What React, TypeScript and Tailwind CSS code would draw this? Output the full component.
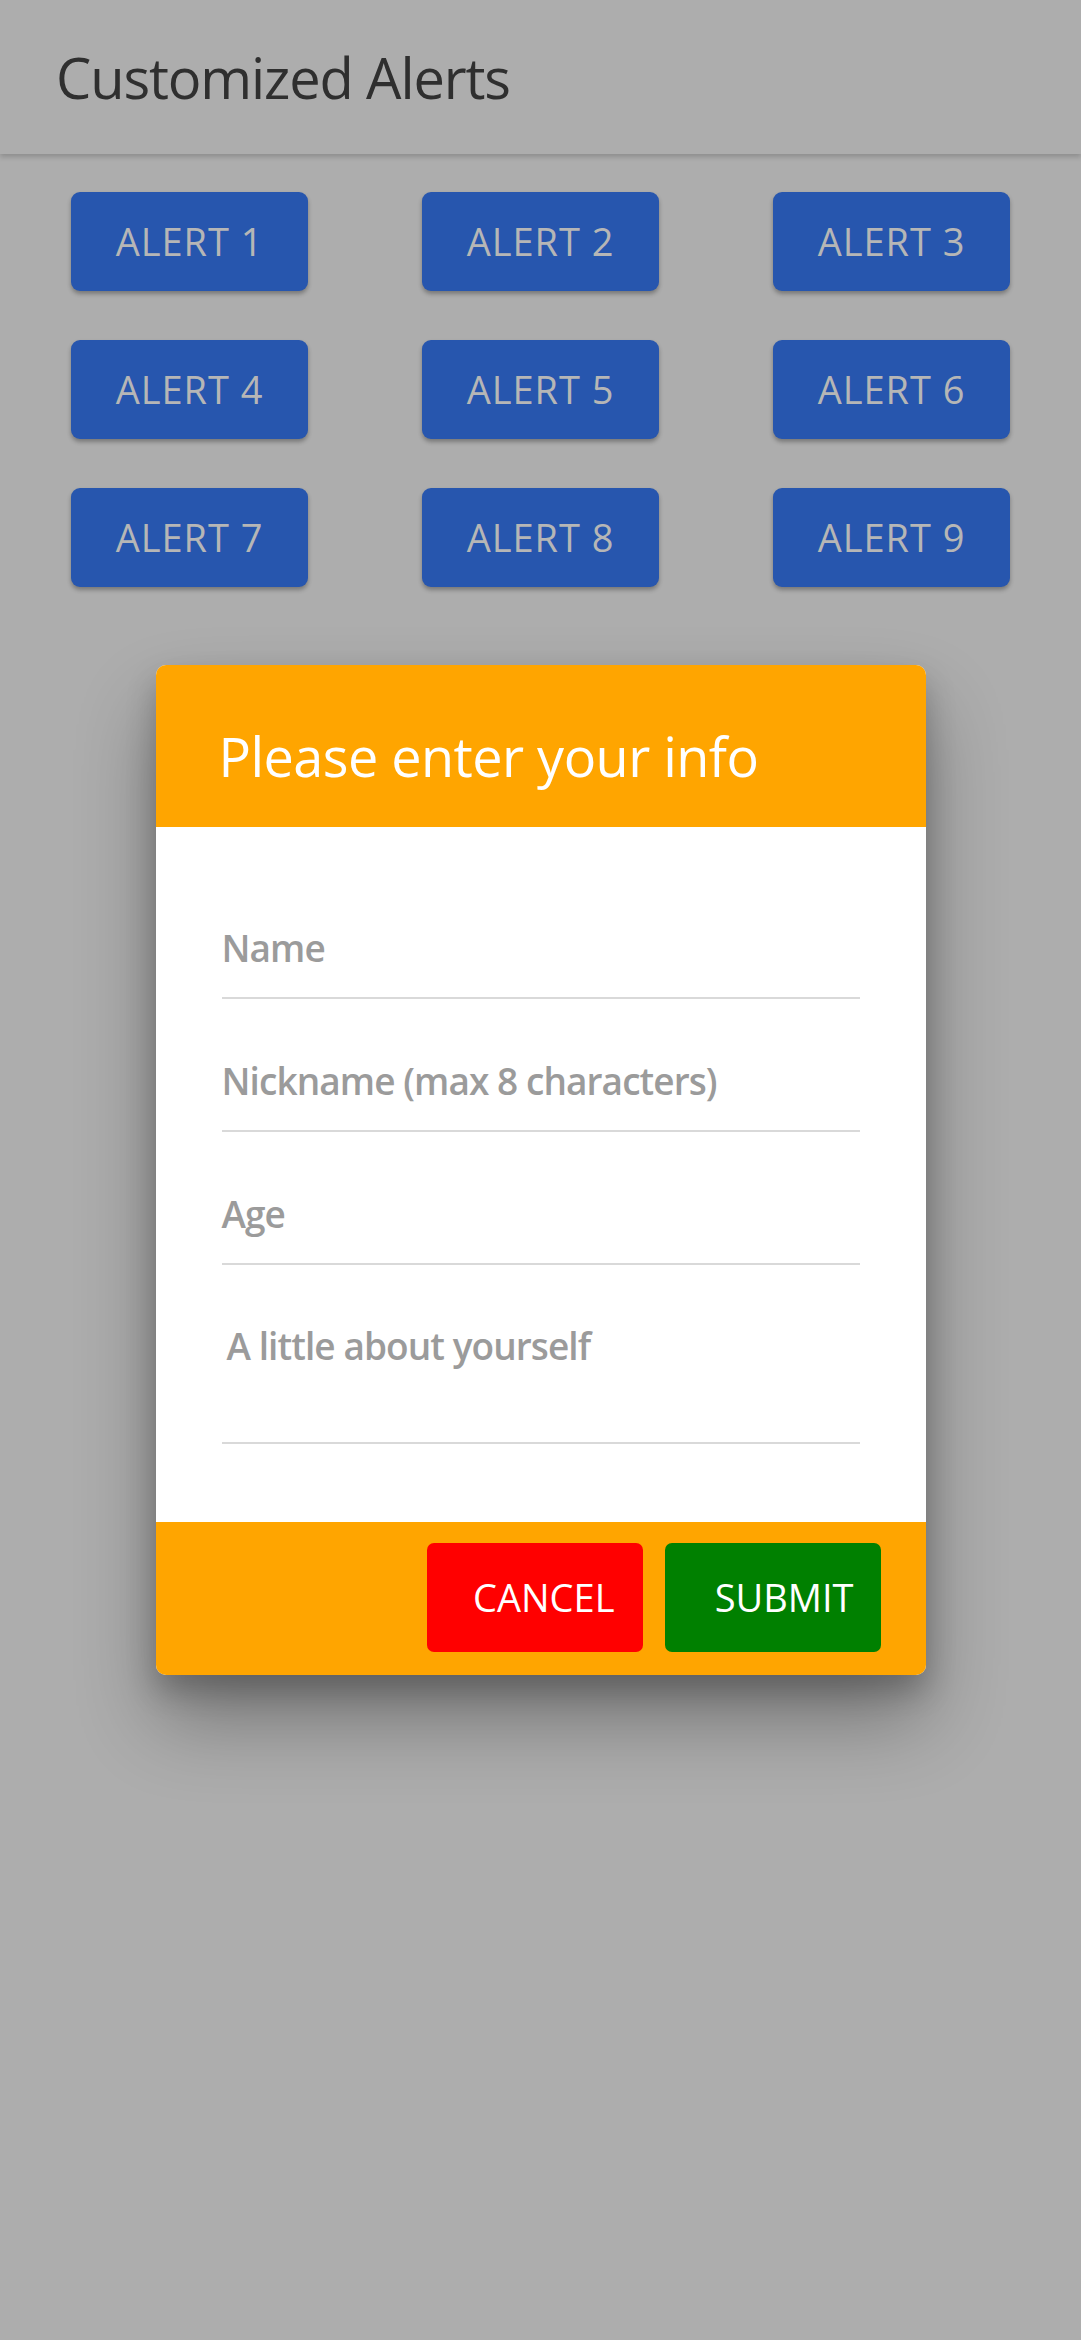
import React from 'react';

const font = { fontFamily: '"Open Sans", "Noto Sans", sans-serif' };

const alerts = [1, 2, 3, 4, 5, 6, 7, 8, 9];

const fields = ['Name', 'Nickname (max 8 characters)', 'Age'];

const App = () => {
  return (
    <div className="relative min-h-[2340px] w-full bg-[#adadad]" style={font}>
      {/* App bar */}
      <header className="flex h-[154px] items-center bg-[#adadad] pl-[56px] shadow-[0_3px_5px_rgba(0,0,0,0.18)]">
        <h1 className="text-[56px] leading-none tracking-[-0.02em] text-[#2f2f2f]">Customized Alerts</h1>
      </header>

      {/* Alert buttons */}
      <div className="grid grid-cols-3 justify-items-center gap-y-[49px] px-[14px] pt-[38px]">
        {alerts.map((n) => (
          <button
            key={n}
            className="flex h-[99px] items-center rounded-[9px] bg-[#2756ae] px-[45px] text-[38px] tracking-[0.025em] text-[#b6b6b6] shadow-[0_3px_4px_rgba(0,0,0,0.3)]"
          >
            ALERT {n}
          </button>
        ))}
      </div>

      {/* Dialog overlay */}
      <div className="absolute inset-0 flex justify-center pt-[665px]">
        <div className="flex h-[1010px] w-[770px] flex-col overflow-hidden rounded-[10px] bg-white shadow-[0_45px_80px_rgba(0,0,0,0.32),0_16px_30px_rgba(0,0,0,0.22)]">
          <div className="flex h-[162px] shrink-0 items-center bg-[#ffa500] pl-[63px] pt-[20px]">
            <h2 className="text-[54px] leading-none tracking-[-0.01em] text-white">Please enter your info</h2>
          </div>

          <div className="flex flex-1 flex-col px-[66px] pt-[39px]">
            {fields.map((label) => (
              <div
                key={label}
                className="flex h-[133px] items-end border-b-2 border-[#d9d9d9] pb-[24px]"
              >
                <span className="text-[37px] font-semibold leading-[50px] tracking-[-0.025em] text-[#9b9b9b]">
                  {label}
                </span>
              </div>
            ))}
            <div className="h-[179px] border-b-2 border-[#d9d9d9] pl-[5px] pt-[56px]">
              <span className="text-[37px] font-semibold leading-[50px] tracking-[-0.025em] text-[#9b9b9b]">
                A little about yourself
              </span>
            </div>
          </div>

          <div className="flex h-[153px] shrink-0 items-center justify-end gap-[22px] bg-[#ffa500] pb-[2px] pr-[45px]">
            <button className="flex h-[109px] w-[216px] items-center justify-end rounded-[7px] bg-[#ff0000] pr-[28px] text-[38px] text-white">
              CANCEL
            </button>
            <button className="flex h-[109px] w-[216px] items-center justify-end rounded-[7px] bg-[#008000] pr-[27px] text-[38px] text-white">
              SUBMIT
            </button>
          </div>
        </div>
      </div>
    </div>
  );
};

export default App;
